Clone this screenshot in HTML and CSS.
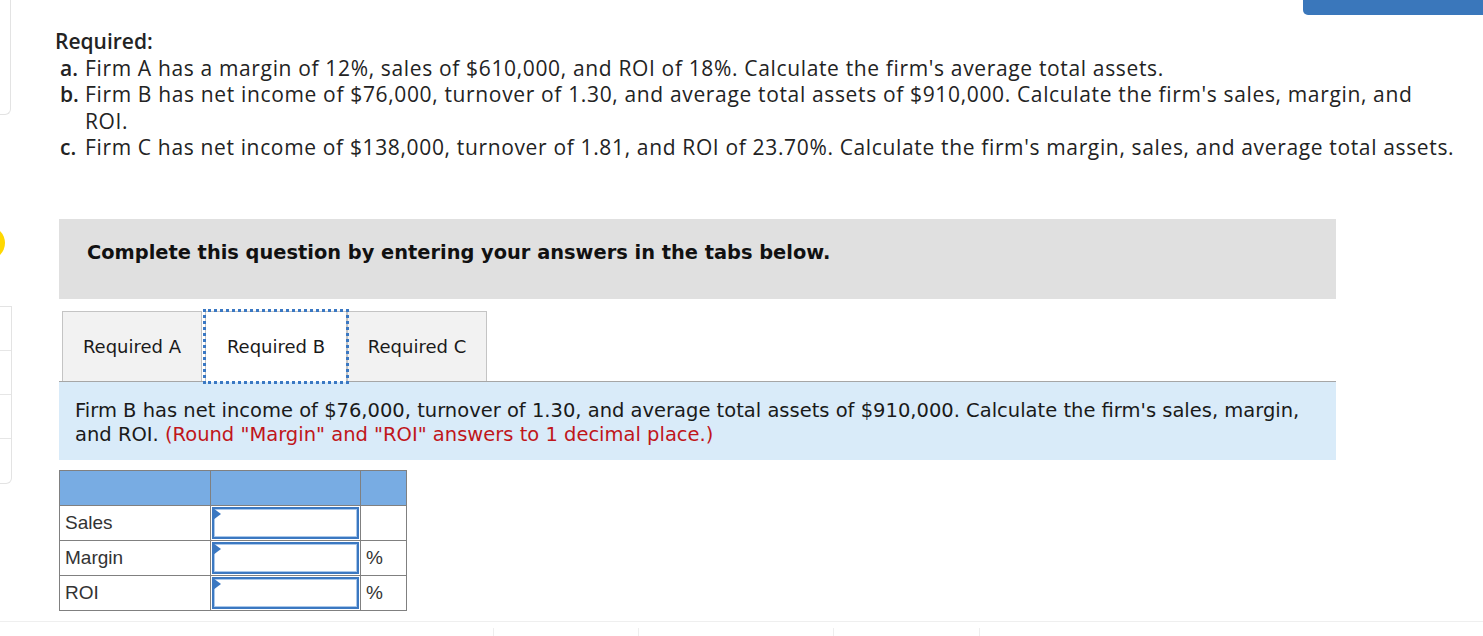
FILE: index.html
```html
<!DOCTYPE html>
<html lang="en">
<head>
    <meta charset="UTF-8">
    <meta name="viewport" content="width=device-width, initial-scale=1.0">
    <title>Required B</title>
    <link rel="stylesheet" href="styles.css">
</head>
<body>

    <!-- Top right action button (cut off) -->
    <div class="top-button"></div>

    <div class="page">
        <!-- Left rail with cut off cards -->
        <div class="rail">
            <div class="rail-card top"></div>
            <div class="rail-dot"></div>
            <div class="rail-card list">
                <div class="rail-row"></div>
                <div class="rail-row"></div>
                <div class="rail-row"></div>
                <div class="rail-row"></div>
            </div>
        </div>

        <div class="main">
            <div class="question">
                <p class="title">Required:</p>
                <div class="item"><b>a.</b><span>Firm A has a margin of 12%, sales of $610,000, and ROI of 18%. Calculate the firm's average total assets.</span></div>
                <div class="item"><b>b.</b><span>Firm B has net income of $76,000, turnover of 1.30, and average total assets of $910,000. Calculate the firm's sales, margin, and ROI.</span></div>
                <div class="item"><b>c.</b><span>Firm C has net income of $138,000, turnover of 1.81, and ROI of 23.70%. Calculate the firm's margin, sales, and average total assets.</span></div>
            </div>

            <div class="tabs-box">
                <div class="instruction">Complete this question by entering your answers in the tabs below.</div>

                <div class="tab-bar">
                    <div class="tab">Required A</div>
                    <div class="tab active">Required B</div>
                    <div class="tab">Required C</div>
                </div>

                <div class="tab-panel">
                    Firm B has net income of $76,000, turnover of 1.30, and average total assets of $910,000. Calculate the firm's sales, margin, and ROI. <span class="hint">(Round "Margin" and "ROI" answers to 1 decimal place.)</span>
                </div>

                <table class="answers">
                    <tr class="head">
                        <th></th><th></th><th></th>
                    </tr>
                    <tr>
                        <td class="label">Sales</td>
                        <td class="entry"><div class="box"></div></td>
                        <td class="unit"></td>
                    </tr>
                    <tr>
                        <td class="label">Margin</td>
                        <td class="entry"><div class="box"></div></td>
                        <td class="unit">%</td>
                    </tr>
                    <tr>
                        <td class="label">ROI</td>
                        <td class="entry"><div class="box"></div></td>
                        <td class="unit">%</td>
                    </tr>
                </table>
            </div>
        </div>
    </div>

    <!-- Footer strip -->
    <div class="footer">
        <span class="tick t1"></span>
        <span class="tick t2"></span>
        <span class="tick t3"></span>
        <span class="tick t4"></span>
    </div>

</body>
</html>
```

FILE: styles.css
```css
* {
    margin: 0;
    padding: 0;
    box-sizing: border-box;
}

body {
    width: 1483px;
    height: 636px;
    overflow: hidden;
    background: #fff;
    position: relative;
    font-family: "Open Sans", "Liberation Sans", sans-serif;
    color: #222;
}

/* Top right button */
.top-button {
    position: absolute;
    top: 0;
    right: 0;
    width: 180px;
    height: 15px;
    background: #3a77bb;
    border-bottom-left-radius: 5px;
}

.page {
    display: flex;
    align-items: flex-start;
}

/* Left rail */
.rail {
    width: 12px;
    display: flex;
    flex-direction: column;
}

.rail-card {
    border: 1px solid #e3e3e3;
    border-left: none;
    border-top: none;
    border-bottom-right-radius: 6px;
}

.rail-card.top {
    width: 11px;
    height: 115px;
}

.rail-dot {
    width: 34px;
    height: 34px;
    margin: 111px 0 0 -29px;
    border-radius: 50%;
    background: #ffd800;
}

.rail-card.list {
    width: 12px;
    margin-top: 46px;
    border-top: 1px solid #e3e3e3;
}

.rail-row {
    height: 44px;
    border-bottom: 1px solid #e6e6e6;
}

.rail-row:last-child {
    border-bottom: none;
}

/* Main column */
.main {
    width: 1420px;
    margin-left: 43px;
    padding-top: 28px;
}

.question {
    font-size: 21px;
    line-height: 26.5px;
    letter-spacing: 0.65px;
    color: #232323;
}

.title {
    font-weight: 600;
    letter-spacing: 0;
}

.item {
    display: flex;
    padding-left: 5px;
}

.item b {
    width: 25px;
    flex-shrink: 0;
    font-weight: 600;
    letter-spacing: 0;
}

.item span {
    width: 1370px;
}

.tabs-box {
    width: 1277px;
    margin: 58px 0 0 4px;
    font-family: "DejaVu Sans", Verdana, sans-serif;
}

.instruction {
    background: #e0e0e0;
    padding: 22px 28px 35px;
    font-size: 19.4px;
    line-height: 23px;
    font-weight: bold;
    color: #111;
}

.tab-bar {
    display: flex;
    margin-top: 12px;
    padding-left: 3px;
    border-bottom: 1px solid #a6a6a6;
}

.tab {
    height: 70px;
    width: 140px;
    display: flex;
    align-items: center;
    justify-content: center;
    font-size: 18px;
    color: #1a1a1a;
    background: #f2f2f2;
    border: 1px solid #c4c4c4;
    border-bottom: none;
}

.tab.active {
    background: #fff;
    width: 142px;
    margin-left: 3px;
    outline: 3px dotted #3a78c3;
    outline-offset: -1px;
    position: relative;
    z-index: 1;
    margin-bottom: -1px;
    height: 71px;
}

.tab-panel {
    background: #d9ebf9;
    padding: 17px 16px 13px;
    font-size: 19.5px;
    line-height: 24px;
    color: #1a1a1a;
}

.hint {
    color: #c0161b;
}

/* Answer table */
.answers {
    margin-top: 10px;
    border-collapse: collapse;
    font-family: "Liberation Sans", Arial, sans-serif;
    font-size: 19px;
    color: #333;
}

.answers td, .answers th {
    border: 1px solid #808080;
    height: 35px;
    padding: 0;
}

.answers .head th {
    background: #78ace3;
}

.answers th:nth-child(1), .answers td.label {
    width: 151px;
}

.answers th:nth-child(2), .answers td.entry {
    width: 150px;
}

.answers th:nth-child(3), .answers td.unit {
    width: 46px;
}

.label {
    padding-left: 5px !important;
}

.unit {
    padding-left: 5px !important;
}

.entry {
    padding: 0 1px !important;
}

.box {
    position: relative;
    height: 32px;
    border: 2px solid #3b78c1;
    box-shadow: inset 0 0 0 1px #a9c7ea;
    background: #fff;
}

.box::before {
    content: "";
    position: absolute;
    top: -1px;
    left: -1px;
    border-left: 8px solid #3b78c1;
    border-top: 6px solid transparent;
    border-bottom: 6px solid transparent;
}

/* Footer strip */
.footer {
    width: 1483px;
    margin-top: 10px;
    height: 20px;
    border-top: 1px solid #efefef;
    position: relative;
}

.tick {
    position: absolute;
    top: 6px;
    width: 1px;
    height: 14px;
    background: #eeeeee;
}

.t1 { left: 493px; }
.t2 { left: 638px; }
.t3 { left: 833px; }
.t4 { left: 979px; }
```
